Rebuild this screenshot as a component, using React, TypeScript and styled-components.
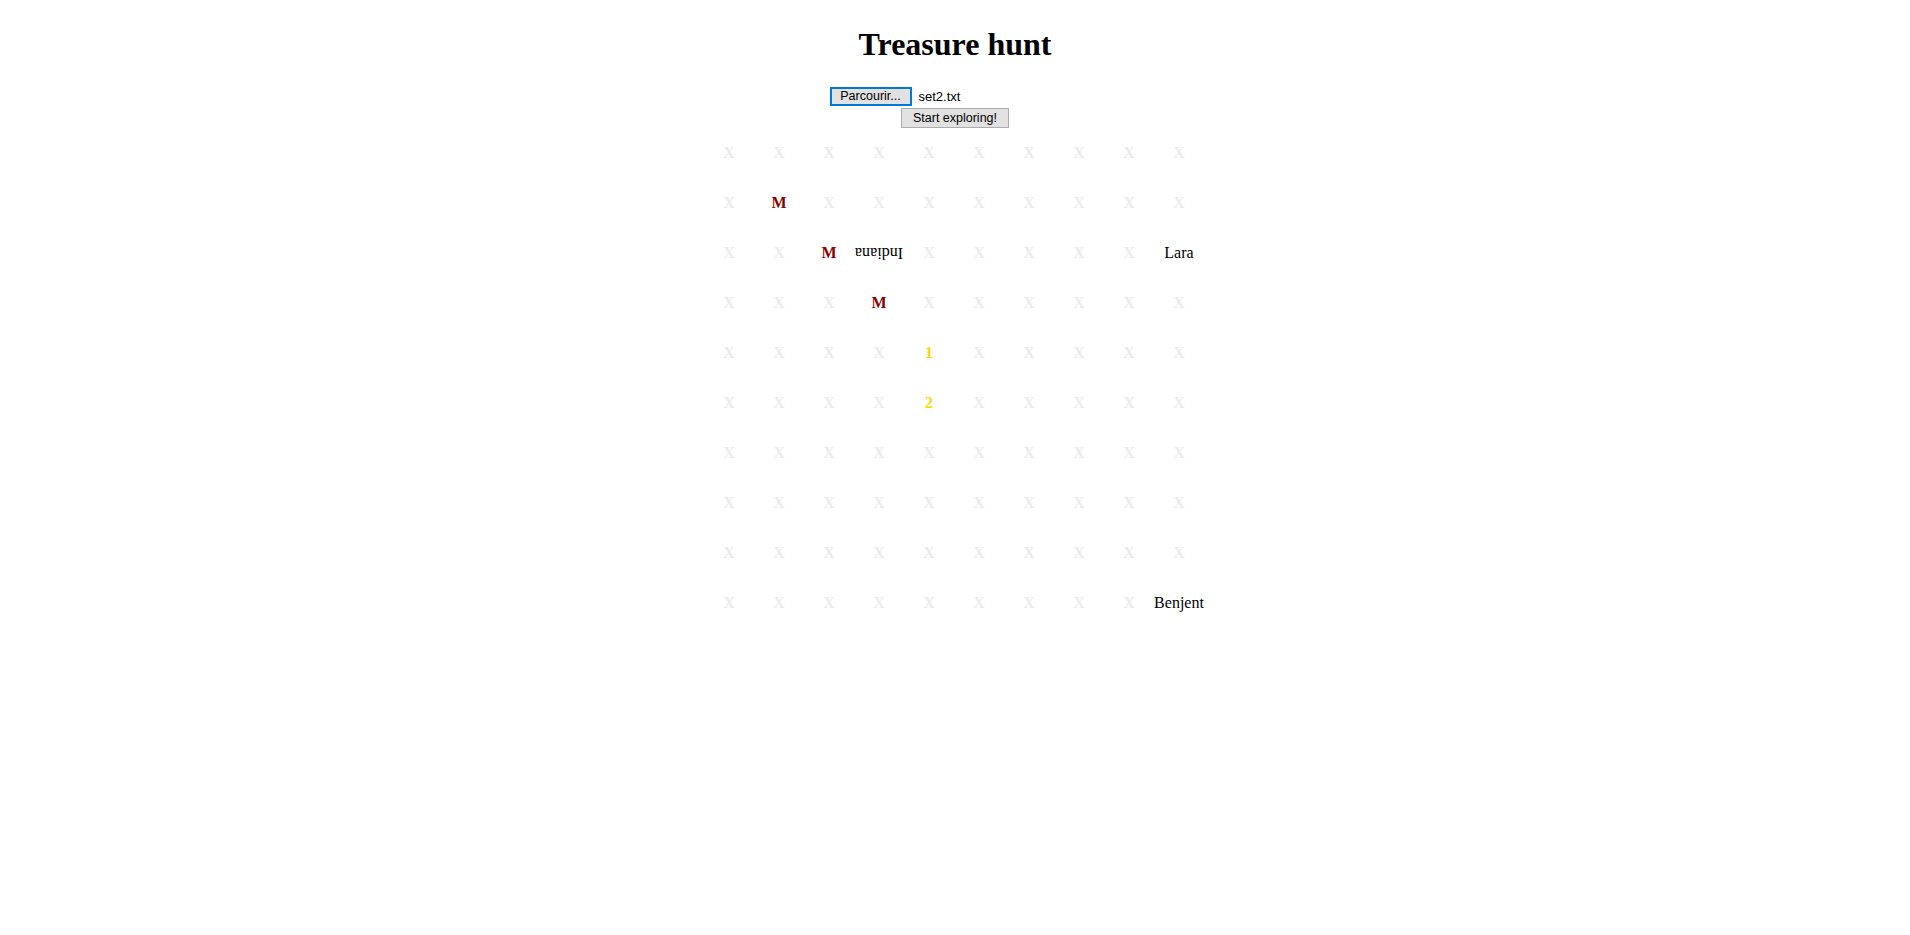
import React from "react";
import styled, { createGlobalStyle } from "styled-components";

const GlobalStyle = createGlobalStyle`
  html, body {
    margin: 0;
    padding: 0;
    background: #ffffff;
  }
  body {
    font-family: "Liberation Serif", "Times New Roman", serif;
    color: #000;
  }
`;

const Page = styled.div`
  display: flex;
  flex-direction: column;
  align-items: center;
  padding-top: 26px;
`;

const Title = styled.h1`
  margin: 0;
  font-family: "Liberation Serif", "Times New Roman", serif;
  font-size: 32px;
  line-height: 37px;
  font-weight: bold;
  text-align: center;
`;

const Controls = styled.div`
  display: flex;
  flex-direction: column;
  align-items: center;
  gap: 2px;
  margin-top: 24px;
`;

const FileRow = styled.div`
  display: flex;
  align-items: center;
  width: 251px;
  height: 19px;
  gap: 7px;
  font-family: "Liberation Sans", Arial, sans-serif;
  font-size: 13px;
`;

const NativeButton = styled.button<{ $focused?: boolean; $w: number; $h: number }>`
  box-sizing: border-box;
  width: ${(p) => p.$w}px;
  height: ${(p) => p.$h}px;
  padding: 0;
  margin: 0;
  font-family: "Liberation Sans", Arial, sans-serif;
  font-size: 12.5px;
  line-height: 1;
  color: #000;
  background: #e1e1e1;
  border: ${(p) => (p.$focused ? "2px solid #0078d7" : "1px solid #adadad")};
  border-radius: 0;
  display: flex;
  align-items: center;
  justify-content: center;
`;

const FileName = styled.span`
  font-family: "Liberation Sans", Arial, sans-serif;
  font-size: 13px;
  color: #000;
`;

const Board = styled.div`
  display: grid;
  grid-template-columns: repeat(10, 50px);
  grid-auto-rows: 50px;
  justify-content: center;
  padding-right: 2px;
`;

type Kind = "empty" | "mountain" | "treasure" | "player" | "playerFlipped";

const Cell = styled.div<{ $kind: Kind }>`
  display: flex;
  align-items: center;
  justify-content: center;
  font-family: "Liberation Serif", "Times New Roman", serif;
  font-size: 16px;
  white-space: nowrap;
  font-weight: ${(p) =>
    p.$kind === "player" || p.$kind === "playerFlipped" ? "normal" : "bold"};
  color: ${(p) =>
    p.$kind === "empty"
      ? "#ebebeb"
      : p.$kind === "mountain"
      ? "#8b0000"
      : p.$kind === "treasure"
      ? "#ffd700"
      : "#000"};
`;

const Flipped = styled.span`
  display: inline-block;
  transform: rotate(180deg);
`;

type CellData = { kind: Kind; text: string };

const buildGrid = (): CellData[][] => {
  const g: CellData[][] = [];
  for (let r = 0; r < 10; r++) {
    const row: CellData[] = [];
    for (let c = 0; c < 10; c++) row.push({ kind: "empty", text: "X" });
    g.push(row);
  }
  g[1][1] = { kind: "mountain", text: "M" };
  g[2][2] = { kind: "mountain", text: "M" };
  g[2][3] = { kind: "playerFlipped", text: "Indiana" };
  g[2][9] = { kind: "player", text: "Lara" };
  g[3][3] = { kind: "mountain", text: "M" };
  g[4][4] = { kind: "treasure", text: "1" };
  g[5][4] = { kind: "treasure", text: "2" };
  g[9][9] = { kind: "player", text: "Benjent" };
  return g;
};

export default function App() {
  const grid = buildGrid();
  return (
    <>
      <GlobalStyle />
      <Page>
        <Title>Treasure hunt</Title>
        <Controls>
          <FileRow>
            <NativeButton $focused $w={82} $h={19}>
              Parcourir...
            </NativeButton>
            <FileName>set2.txt</FileName>
          </FileRow>
          <NativeButton $w={108} $h={20}>
            Start exploring!
          </NativeButton>
        </Controls>
        <Board>
          {grid.map((row, r) =>
            row.map((cell, c) => (
              <Cell key={`${r}-${c}`} $kind={cell.kind}>
                {cell.kind === "playerFlipped" ? (
                  <Flipped>{cell.text}</Flipped>
                ) : (
                  cell.text
                )}
              </Cell>
            ))
          )}
        </Board>
      </Page>
    </>
  );
}
